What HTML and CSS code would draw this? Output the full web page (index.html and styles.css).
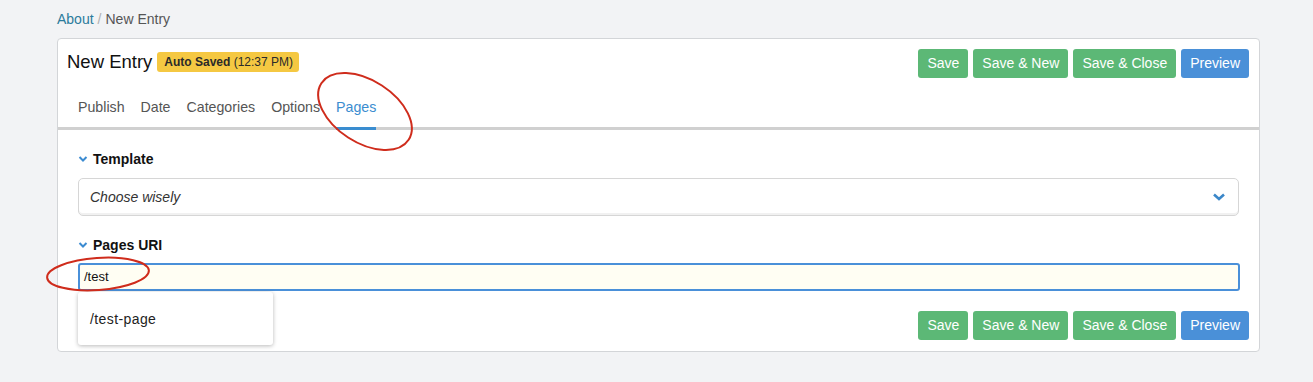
FILE: index.html
```html
<!DOCTYPE html>
<html>
<head>
<meta charset="utf-8">
<link rel="stylesheet" href="styles.css">
</head>
<body>
<div class="page">
  <div class="breadcrumb"><a class="crumb-link">About</a><span class="crumb-sep">/</span><span class="crumb-current">New Entry</span></div>
  <div class="card">
    <div class="card-header">
      <div class="header-top">
        <div class="title-wrap">
          <h1 class="title">New Entry</h1>
          <span class="badge"><b>Auto Saved</b> (12:37 PM)</span>
        </div>
        <div class="btn-group">
          <button class="btn btn-green">Save</button>
          <button class="btn btn-green">Save &amp; New</button>
          <button class="btn btn-green">Save &amp; Close</button>
          <button class="btn btn-blue">Preview</button>
        </div>
      </div>
      <nav class="tabs">
        <span class="tab">Publish</span>
        <span class="tab">Date</span>
        <span class="tab">Categories</span>
        <span class="tab">Options</span>
        <span class="tab tab-active">Pages</span>
      </nav>
    </div>
    <div class="card-body">
      <div class="field-label"><svg class="chev" width="10" height="8" viewBox="0 0 10 8"><path d="M1.5 2 L5 5.5 L8.5 2" fill="none" stroke="#3b8bd1" stroke-width="2"/></svg>Template</div>
      <div class="select">
        <span class="select-text">Choose wisely</span>
        <svg width="14" height="10" viewBox="0 0 14 10"><path d="M2 2.5 L7 7 L12 2.5" fill="none" stroke="#3b87c9" stroke-width="2.6"/></svg>
      </div>
      <div class="field-label label-second"><svg class="chev" width="10" height="8" viewBox="0 0 10 8"><path d="M1.5 2 L5 5.5 L8.5 2" fill="none" stroke="#3b8bd1" stroke-width="2"/></svg>Pages URI</div>
      <div class="input-wrap">
        <div class="input">/test</div>
        <div class="suggest"><span>/test-page</span></div>
      </div>
      <div class="btn-group footer-btns">
        <button class="btn btn-green">Save</button>
        <button class="btn btn-green">Save &amp; New</button>
        <button class="btn btn-green">Save &amp; Close</button>
        <button class="btn btn-blue">Preview</button>
      </div>
    </div>
  </div>
</div>
<svg class="annotations" width="1313" height="382" viewBox="0 0 1313 382">
  <ellipse cx="365" cy="111.5" rx="52" ry="31" transform="rotate(33 365 111.5)" fill="none" stroke="#cf2c1c" stroke-width="2"/>
  <ellipse cx="98" cy="274" rx="51" ry="16" transform="rotate(-4 98 274)" fill="none" stroke="#cf2c1c" stroke-width="2"/>
</svg>
</body>
</html>
```
FILE: styles.css
```css
html, body {
  margin: 0;
  padding: 0;
  background: #f2f3f5;
  font-family: "Liberation Sans", Arial, sans-serif;
  color: #333;
}
.page {
  padding: 9px 53px 0 57px;
}
.breadcrumb {
  font-size: 14px;
  line-height: 20px;
  margin-bottom: 9px;
}
.crumb-link {
  color: #2b7b9c;
}
.crumb-sep {
  color: #b0b0b0;
  margin: 0 4px;
}
.crumb-current {
  color: #555;
}
.card {
  background: #fff;
  border: 1px solid #d3d5d8;
  border-radius: 4px;
}
.card-header {
  border-bottom: 3px solid #d0d0d0;
  padding: 10px 10px 0 9px;
}
.header-top {
  display: flex;
  justify-content: space-between;
  align-items: center;
}
.title-wrap {
  display: flex;
  align-items: center;
  gap: 5px;
  margin-top: -4px;
}
.title {
  margin: 0;
  font-size: 18.5px;
  font-weight: normal;
  color: #111;
  line-height: 22px;
}
.badge {
  background: #f5c842;
  color: #2a2a2a;
  font-size: 12px;
  line-height: 20px;
  padding: 0 6px 0 7px;
  border-radius: 3px;
}
.btn-group {
  display: flex;
  gap: 5px;
}
.btn {
  font-family: "Liberation Sans", Arial, sans-serif;
  font-size: 14px;
  color: #fff;
  height: 29px;
  padding: 0 9px;
  border: none;
  border-radius: 3px;
  line-height: 29px;
}
.btn-green {
  background: #5cb876;
}
.btn-blue {
  background: #4a90d8;
}
.tabs {
  display: flex;
  gap: 16px;
  margin: 9px 0 -3px 11px;
}
.tab {
  font-size: 14.2px;
  line-height: 20px;
  color: #555;
  padding: 10px 0 10px;
  border-bottom: 3px solid transparent;
}
.tab-active {
  color: #3a8dd0;
  border-bottom-color: #3a8dd0;
}
.card-body {
  padding: 19px 20px 11px 20px;
}
.field-label {
  display: flex;
  align-items: center;
  font-size: 14px;
  font-weight: bold;
  color: #111;
  line-height: 20px;
  margin-bottom: 9px;
}
.chev {
  margin-right: 5px;
}
.label-second {
  margin-top: 19px;
  margin-bottom: 8px;
}
.select {
  height: 36px;
  border: 1px solid #d6d6d6;
  border-radius: 5px;
  box-shadow: inset 0 -2px 0 #f1f1f1;
  display: flex;
  align-items: center;
  justify-content: space-between;
  padding: 0 12px 0 11px;
}
.select-text {
  font-style: italic;
  font-size: 14px;
  color: #333;
}
.input-wrap {
  position: relative;
}
.input {
  height: 24px;
  border: 2px solid #4a90d9;
  border-radius: 3px;
  background: #fffef3;
  font-size: 13px;
  line-height: 24px;
  padding-left: 4px;
  color: #111;
  margin-right: -1px;
}
.suggest {
  position: absolute;
  left: 0;
  top: 29px;
  width: 195px;
  height: 53px;
  background: #fff;
  border-radius: 3px;
  box-shadow: 0 1px 4px rgba(0, 0, 0, 0.28);
  display: flex;
  align-items: center;
  padding-left: 12px;
  box-sizing: border-box;
  font-size: 14px;
  letter-spacing: 0.4px;
  color: #222;
}
.footer-btns {
  justify-content: flex-end;
  margin-top: 20px;
  margin-right: -10px;
}
.annotations {
  position: absolute;
  left: 0;
  top: 0;
  pointer-events: none;
}
```
